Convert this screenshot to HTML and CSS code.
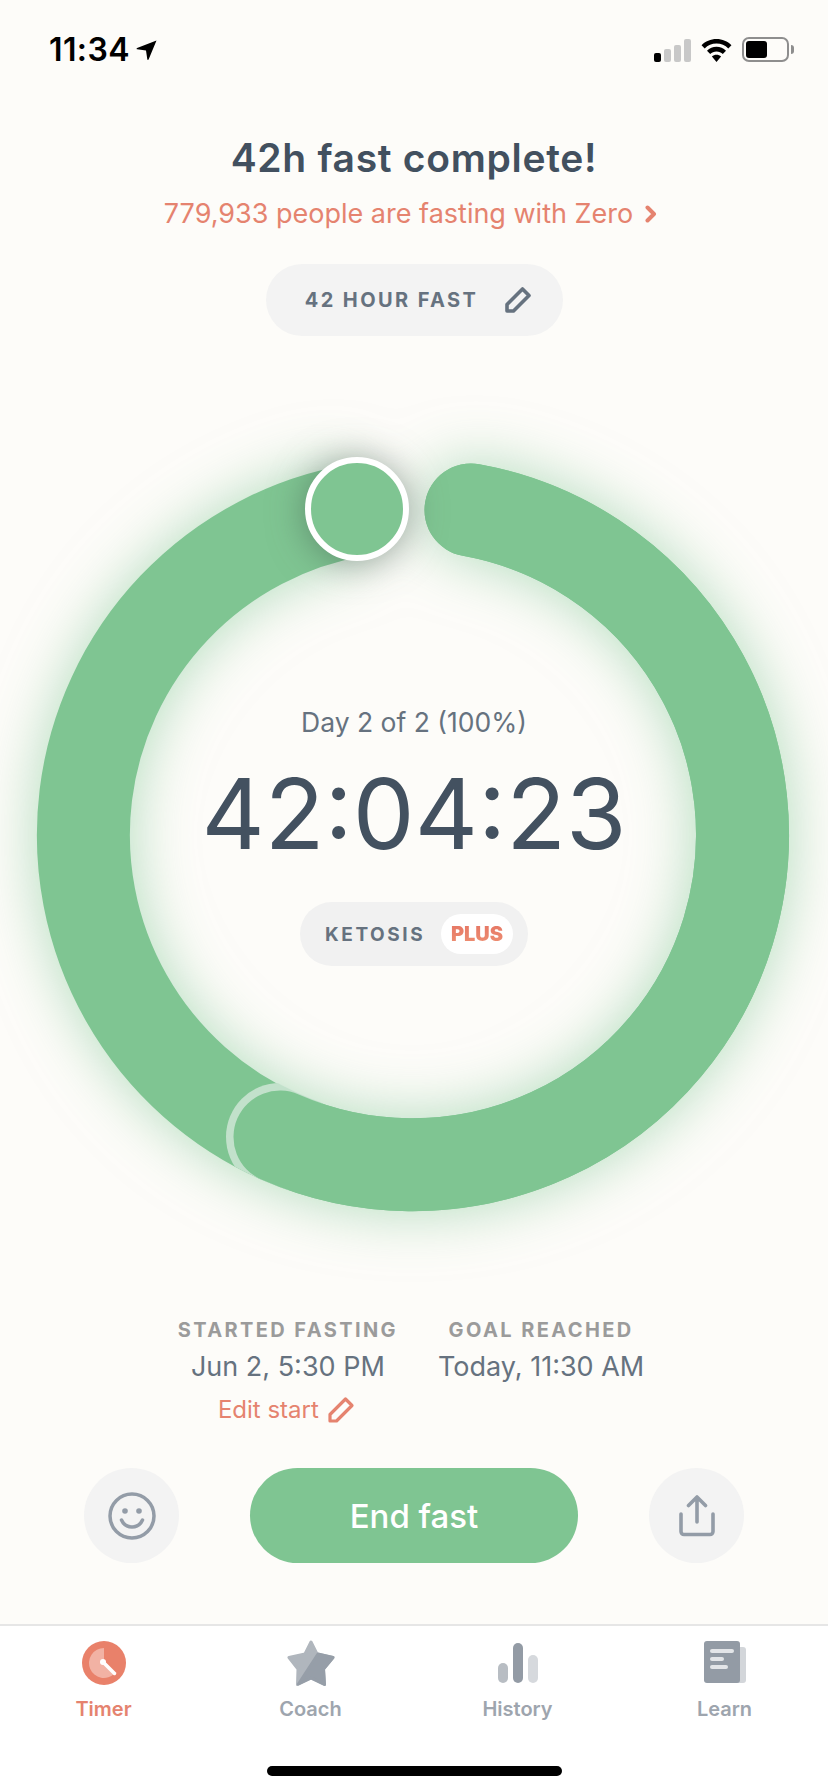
FILE: index.html
```html
<!DOCTYPE html>
<html lang="en">
<head>
    <meta charset="UTF-8">
    <meta name="viewport" content="width=device-width, initial-scale=1.0">
    <title>Zero</title>
    <link rel="stylesheet" href="styles.css">
</head>
<body>
    <div class="phone">
        <div class="status-bar">
            <div class="status-time">
                <span>11:34</span>
                <svg class="status-arrow" viewBox="0 0 21 20"><path d="M20.500 0.500 12.600 19.400c-.3.7-1.200.6-1.300-.1L10 10.600 1.200 9.300C.5 9.200.4 8.300 1.100 8z" fill="#000"/></svg>
            </div>
            <div class="status-icons">
                <div class="signal">
                    <i class="bar-1"></i><i class="bar-2"></i><i class="bar-3"></i><i class="bar-4"></i>
                </div>
                <svg class="wifi" viewBox="0 0 32 24"><path d="M16 0C9.900 0 4.400 2.400.4 6.400l3.300 3.400C6.900 6.700 11.200 4.800 16 4.800s9.100 1.900 12.300 5l3.300-3.400C27.600 2.400 22.100 0 16 0zM16 8.200c-3.800 0-7.300 1.500-9.900 4l3.300 3.400c1.700-1.600 4-2.600 6.600-2.600s4.900 1 6.600 2.600l3.300-3.400c-2.600-2.500-6.100-4-9.900-4zM16 16.400c-1.800 0-3.500.7-4.800 1.900L16 24l4.800-5.700c-1.300-1.200-3-1.900-4.800-1.900z" fill="#000"/></svg>
                <div class="battery"><div class="battery-fill"></div></div>
            </div>
        </div>

        <header class="top">
            <h1>42h fast complete!</h1>
            <p class="people">779,933 people are fasting with Zero
                <svg class="chevron" viewBox="0 0 12 18"><path d="M2.500 2.500 9 9l-6.500 6.500" fill="none" stroke="#e5836f" stroke-width="4" stroke-linecap="round" stroke-linejoin="round"/></svg>
            </p>
            <div class="goal-pill">
                <span>42 HOUR FAST</span>
                <svg class="pencil" viewBox="0 0 28 28"><path d="M3 25V18.500L18.500 3 25 9.500 9.500 25z" fill="none" stroke="#66727f" stroke-width="3.600" stroke-linejoin="round"/></svg>
            </div>
        </header>

        <section class="ring-area">
            <svg class="ring" viewBox="0 0 828 870">
                <defs>
                    <mask id="left-band" maskUnits="userSpaceOnUse" x="0" y="0" width="828" height="870">
                        <circle cx="414" cy="435" r="330" fill="none" stroke="#fff" stroke-width="94"/>
                    </mask>
                </defs>
                <g class="ring-glow">
                    <path d="M280 737A330 330 0 0 1 357 110" fill="none" stroke="#7fc592" stroke-width="93"/>
                    <path d="M471 110A330 330 0 1 1 280 737" fill="none" stroke="#7fc592" stroke-width="93" stroke-linecap="round"/>
                </g>
                <circle cx="280" cy="737" r="54" fill="#c2e1cb" mask="url(#left-band)"/>
                <path d="M471 110A330 330 0 1 1 280 737" fill="none" stroke="#7fc592" stroke-width="93" stroke-linecap="round"/>
                <circle class="knob" cx="357" cy="109" r="49" fill="#7fc592" stroke="#fff" stroke-width="6"/>
            </svg>
            <div class="ring-center">
                <p class="day">Day 2 of 2 (100%)</p>
                <p class="clock">42:04:23</p>
                <div class="stage-pill">
                    <span>KETOSIS</span>
                    <b class="plus"><span>PLUS</span></b>
                </div>
            </div>
        </section>

        <section class="times">
            <div class="time-col">
                <h2>STARTED FASTING</h2>
                <p class="time-value">Jun 2, 5:30 PM</p>
                <p class="edit">Edit start
                    <svg class="pencil" viewBox="0 0 28 28"><path d="M3 25V18.500L18.500 3 25 9.500 9.500 25z" fill="none" stroke="#e5836f" stroke-width="3.200" stroke-linejoin="round"/></svg>
                </p>
            </div>
            <div class="time-col">
                <h2>GOAL REACHED</h2>
                <p class="time-value">Today, 11:30 AM</p>
            </div>
        </section>

        <section class="actions">
            <button class="round-btn">
                <svg class="smile" viewBox="0 0 48 48">
                    <circle cx="24" cy="24" r="22" fill="none" stroke="#939ca7" stroke-width="3.500"/>
                    <circle cx="17" cy="19" r="2.800" fill="#939ca7"/>
                    <circle cx="31" cy="19" r="2.800" fill="#939ca7"/>
                    <path d="M13.500 28c2 4.500 6 7 10.500 7s8.500-2.500 10.500-7" fill="none" stroke="#939ca7" stroke-width="3.500" stroke-linecap="round"/>
                </svg>
            </button>
            <button class="end-btn">End fast</button>
            <button class="round-btn">
                <svg class="share" viewBox="0 0 38 42">
                    <path d="M19 27V3M10.500 10.500 19 2l8.500 8.500M3 19v17.500a3 3 0 0 0 3 3h26a3 3 0 0 0 3-3V19" fill="none" stroke="#939ca7" stroke-width="3.600" stroke-linecap="round" stroke-linejoin="round"/>
                </svg>
            </button>
        </section>

        <nav class="tabs">
            <a class="tab tab-active">
                <svg viewBox="0 0 48 48">
                    <circle cx="24" cy="24" r="22" fill="#e9816a"/>
                    <path d="M24 9A15 15 0 1 0 34.600 34.600L24 24z" fill="#f2b2a4"/>
                    <path d="M23.500 23.500 34.500 34.500" stroke="#fff" stroke-width="3.500" stroke-linecap="round"/>
                    <circle cx="23" cy="23" r="3" fill="#fff"/>
                </svg>
                <span>Timer</span>
            </a>
            <a class="tab">
                <svg viewBox="0 0 48 48">
                    <path d="M24 3 30 15 46 18.500 36.500 30 37.500 45.500 24 39 10.500 45.500 11 30 2 18.500 18 15z" fill="#b0b6bd" stroke="#b0b6bd" stroke-width="3" stroke-linejoin="round"/>
                    <path d="M31 15 46 18.500 36.500 30 37.500 45.500 24 39 11.500 45z" fill="#969ea8" stroke="#969ea8" stroke-width="3" stroke-linejoin="round"/>
                </svg>
                <span>Coach</span>
            </a>
            <a class="tab">
                <svg viewBox="0 0 48 48">
                    <rect x="4" y="24" width="10" height="20" rx="5" fill="#b8bdc3"/>
                    <rect x="19" y="4" width="10" height="40" rx="5" fill="#939ba5"/>
                    <rect x="34" y="16" width="10" height="28" rx="5" fill="#d6d9dd"/>
                </svg>
                <span>History</span>
            </a>
            <a class="tab">
                <svg viewBox="0 0 48 48">
                    <rect x="14" y="8" width="31" height="36" rx="3" fill="#d3d6da"/>
                    <rect x="3" y="2" width="36" height="42" rx="3" fill="#939ba5"/>
                    <rect x="9" y="10" width="24" height="4" rx="2" fill="#e3e5e8"/>
                    <rect x="9" y="18" width="14" height="4" rx="2" fill="#e3e5e8"/>
                    <rect x="9" y="26" width="18" height="4" rx="2" fill="#e3e5e8"/>
                </svg>
                <span>Learn</span>
            </a>
        </nav>
        <div class="home-bar"></div>
    </div>
</body>
</html>
```

FILE: styles.css
```css
body {
    margin: 0;
    background-color: #fdfcf9;
    font-family: 'Inter', 'Liberation Sans', sans-serif;
}

p, h1, h2 {
    margin: 0;
}

.phone {
    position: relative;
    width: 828px;
    height: 1792px;
    overflow: hidden;
    display: flex;
    flex-direction: column;
}

/* status bar */
.status-bar {
    height: 100px;
    box-sizing: border-box;
    padding: 32px 34px 0 49px;
    display: flex;
    justify-content: space-between;
    align-items: flex-start;
}

.status-time {
    display: flex;
    align-items: center;
    gap: 6px;
    font-size: 32px;
    line-height: 36px;
    font-weight: 600;
    letter-spacing: 0.4px;
    color: #000;
}

.status-arrow {
    width: 21px;
    height: 20px;
}

.status-icons {
    display: flex;
    align-items: flex-end;
    gap: 10px;
    height: 30px;
}

.signal {
    display: flex;
    align-items: flex-end;
    gap: 3px;
    height: 23px;
}

.signal i {
    width: 7px;
    border-radius: 2px;
    background-color: #c8c8c8;
}

.signal .bar-1 { height: 9px; background-color: #000; }
.signal .bar-2 { height: 13px; }
.signal .bar-3 { height: 17px; }
.signal .bar-4 { height: 23px; }

.wifi {
    width: 31px;
    height: 23px;
}

.battery {
    position: relative;
    width: 47px;
    height: 25px;
    box-sizing: border-box;
    border: 2px solid #8e8e8e;
    border-radius: 7px;
    padding: 2px;
    margin-right: 5px;
}

.battery::after {
    content: "";
    position: absolute;
    right: -7px;
    top: 6px;
    width: 3px;
    height: 9px;
    border-radius: 0 3px 3px 0;
    background-color: #8e8e8e;
}

.battery-fill {
    width: 21px;
    height: 17px;
    border-radius: 3px;
    background-color: #000;
}

/* heading */
.top {
    display: flex;
    flex-direction: column;
    align-items: center;
    padding-top: 38px;
}

.top h1 {
    font-size: 39px;
    line-height: 40px;
    font-weight: 600;
    letter-spacing: 0.7px;
    color: #42505f;
}

.people {
    margin-top: 18px;
    padding-right: 7px;
    display: flex;
    align-items: center;
    gap: 12px;
    font-size: 27px;
    line-height: 36px;
    color: #e5836f;
}

.chevron {
    width: 12px;
    height: 18px;
}

.goal-pill {
    margin-top: 32px;
    width: 297px;
    height: 72px;
    box-sizing: border-box;
    padding-left: 9px;
    border-radius: 36px;
    background-color: #f3f3f3;
    display: flex;
    align-items: center;
    justify-content: center;
    gap: 26px;
    font-size: 20px;
    font-weight: 700;
    letter-spacing: 2.4px;
    color: #66727f;
}

.pencil {
    width: 28px;
    height: 28px;
}

/* ring */
.ring-area {
    position: relative;
    height: 870px;
    margin-top: 64px;
}

.ring {
    display: block;
    width: 828px;
    height: 870px;
    overflow: visible;
}

.ring-glow {
    filter: drop-shadow(0 0 30px rgba(127, 197, 146, 0.6));
}

.knob {
    filter: drop-shadow(0 2px 18px rgba(60, 80, 70, 0.5));
}

.ring-center {
    position: absolute;
    left: 0;
    right: 0;
    top: 304px;
    display: flex;
    flex-direction: column;
    align-items: center;
}

.day {
    font-size: 26.5px;
    line-height: 36px;
    color: #66727f;
}

.clock {
    margin-top: 16px;
    font-size: 98px;
    line-height: 116px;
    font-weight: 400;
    color: #435160;
}

.stage-pill {
    margin-top: 30px;
    width: 228px;
    height: 64px;
    box-sizing: border-box;
    padding: 0 15px 0 25px;
    border-radius: 32px;
    background-color: #f1f1f1;
    display: flex;
    align-items: center;
    justify-content: space-between;
    font-size: 19px;
    font-weight: 700;
    letter-spacing: 2.6px;
    color: #66727f;
}

.plus {
    width: 72px;
    height: 40px;
    border-radius: 20px;
    background-color: #fff;
    display: flex;
    align-items: center;
    justify-content: center;
    font-size: 20px;
    letter-spacing: 0;
}

.plus span {
    background: linear-gradient(#e57463, #ee9173);
    -webkit-background-clip: text;
    background-clip: text;
    color: transparent;
}

/* start and goal times */
.times {
    margin-top: 46px;
    padding-right: 6px;
    display: flex;
    justify-content: center;
    gap: 40px;
    height: 110px;
    text-align: center;
}

.time-col h2 {
    font-size: 20px;
    line-height: 28px;
    font-weight: 700;
    letter-spacing: 2.4px;
    color: #9b9b9b;
}

.time-value {
    margin-top: 6px;
    font-size: 27px;
    line-height: 34px;
    color: #66727f;
}

.edit {
    margin-top: 10px;
    display: flex;
    align-items: center;
    justify-content: center;
    gap: 8px;
    padding-right: 3px;
    font-size: 24px;
    line-height: 32px;
    color: #e5836f;
}

/* buttons */
.actions {
    margin-top: 42px;
    padding: 0 84px;
    display: flex;
    justify-content: space-between;
    align-items: center;
}

button {
    border: none;
    padding: 0;
    font-family: inherit;
}

.round-btn {
    width: 95px;
    height: 95px;
    border-radius: 50%;
    background-color: #f3f3f3;
    display: flex;
    align-items: center;
    justify-content: center;
}

.smile {
    width: 48px;
    height: 48px;
}

.share {
    width: 38px;
    height: 42px;
}

.end-btn {
    width: 328px;
    height: 95px;
    border-radius: 48px;
    background-color: #7fc592;
    color: #fff;
    font-size: 33px;
    font-weight: 500;
}

/* tab bar */
.tabs {
    margin-top: 61px;
    flex: 1;
    background-color: #fff;
    border-top: 2px solid #e6e6e6;
    display: grid;
    grid-template-columns: repeat(4, 1fr);
}

.tab {
    padding-top: 13px;
    display: flex;
    flex-direction: column;
    align-items: center;
    gap: 8px;
    font-size: 20px;
    line-height: 28px;
    font-weight: 600;
    color: #9ea5ae;
}

.tab svg {
    width: 48px;
    height: 48px;
}

.tab-active {
    color: #e5836f;
}

.home-bar {
    position: absolute;
    left: 267px;
    bottom: 16px;
    width: 295px;
    height: 10px;
    border-radius: 5px;
    background-color: #000;
}
```
